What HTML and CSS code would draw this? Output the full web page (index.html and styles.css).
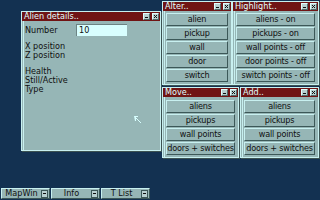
FILE: index.html
```html
<!DOCTYPE html>
<html>
<head>
<meta charset="utf-8">
<link rel="stylesheet" href="styles.css">
</head>
<body>
<div class="desktop">
  <div class="win win-alien">
    <div class="title"><span class="tt">Alien details..</span><span class="gad gad-depth"></span><span class="gad gad-close"></span></div>
    <div class="body form">
      <div class="row"><span class="lbl">Number</span><span class="field">10</span></div>
      <div class="grp"><div>X position</div><div>Z position</div></div>
      <div class="grp"><div>Health</div><div>Still/Active</div><div>Type</div></div>
    </div>
  </div>

  <div class="win win-alter">
    <div class="title"><span class="tt">Alter..</span><span class="gad gad-depth"></span><span class="gad gad-close"></span></div>
    <div class="body btns">
      <div class="btn">alien</div>
      <div class="btn">pickup</div>
      <div class="btn">wall</div>
      <div class="btn">door</div>
      <div class="btn">switch</div>
    </div>
  </div>

  <div class="win win-high">
    <div class="title"><span class="tt">Highlight..</span><span class="gad gad-depth"></span><span class="gad gad-close"></span></div>
    <div class="body btns">
      <div class="btn">aliens - on</div>
      <div class="btn">pickups - on</div>
      <div class="btn">wall points - off</div>
      <div class="btn">door points - off</div>
      <div class="btn">switch points - off</div>
    </div>
  </div>

  <div class="win win-move">
    <div class="title"><span class="tt">Move..</span><span class="gad gad-depth"></span><span class="gad gad-close"></span></div>
    <div class="body btns">
      <div class="btn">aliens</div>
      <div class="btn">pickups</div>
      <div class="btn">wall points</div>
      <div class="btn">doors + switches</div>
    </div>
  </div>

  <div class="win win-add">
    <div class="title"><span class="tt">Add..</span><span class="gad gad-depth"></span><span class="gad gad-close"></span></div>
    <div class="body btns">
      <div class="btn">aliens</div>
      <div class="btn">pickups</div>
      <div class="btn">wall points</div>
      <div class="btn">doors + switches</div>
    </div>
  </div>

  <svg class="cursor" width="8" height="8" viewBox="0 0 8 8">
    <path d="M0 0h4v1h-2v1h1v1h1v1h1v1h1v1h1v1h-1v-1h-1v-1h-1v-1h-1v-1h-1v2h-1z" fill="#d8ffff"/>
  </svg>

  <div class="taskbar">
    <div class="task"><span class="tl">MapWin</span><span class="tg"></span></div>
    <div class="task"><span class="tl">Info</span><span class="tg"></span></div>
    <div class="task"><span class="tl">T List</span><span class="tg"></span></div>
  </div>
</div>
</body>
</html>
```
FILE: styles.css
```css
* { box-sizing: border-box; }
html, body {
  margin: 0;
  padding: 0;
  width: 320px;
  height: 200px;
  overflow: hidden;
  background: #133151;
}
body {
  font-family: "Liberation Sans Narrow", "DejaVu Sans Condensed", "Liberation Sans", sans-serif;
  font-size: 9px;
  color: #101010;
}
.desktop {
  position: relative;
  width: 320px;
  height: 200px;
}
.win {
  position: absolute;
  background: #96b6b6;
  border: 1px solid #c8f0f0;
  box-shadow: inset 1px 0 0 #96b6b6, inset 2px 0 0 #c8f0f0, 1px 1px 0 #3c5252;
  display: flex;
  flex-direction: column;
}
.title {
  height: 9px;
  background: #701414;
  color: #e0ffff;
  display: flex;
  align-items: center;
  padding: 0 1px 0 2px;
  gap: 2px;
  flex: none;
  line-height: 9px;
}
.tt { flex: 1; white-space: nowrap; }
.gad {
  width: 7px;
  height: 7px;
  background: #b8d0d0;
  border: 1px solid #e0ffff;
  border-right-color: #506868;
  border-bottom-color: #506868;
  position: relative;
  flex: none;
}
.gad-depth::after {
  content: "";
  position: absolute;
  left: 1px;
  top: 3px;
  width: 3px;
  height: 1px;
  background: #101010;
}
.gad-close::after {
  content: "";
  position: absolute;
  left: 1px;
  top: 1px;
  width: 3px;
  height: 3px;
  background:
    linear-gradient(#101010, #101010) 0 0 / 1px 1px no-repeat,
    linear-gradient(#101010, #101010) 2px 0 / 1px 1px no-repeat,
    linear-gradient(#101010, #101010) 1px 1px / 1px 1px no-repeat,
    linear-gradient(#101010, #101010) 0 2px / 1px 1px no-repeat,
    linear-gradient(#101010, #101010) 2px 2px / 1px 1px no-repeat;
}
.win-alien { left: 21px; top: 11px; width: 140px; height: 140px; }
.win-alter { left: 162px; top: 1px; width: 70px; height: 84px; }
.win-high { left: 232px; top: 1px; width: 87px; height: 84px; }
.win-move { left: 162px; top: 87px; width: 77px; height: 71px; }
.win-add { left: 240px; top: 87px; width: 79px; height: 71px; }

.btns {
  display: flex;
  flex-direction: column;
  gap: 1px;
  padding: 2px 3px 0 3px;
}
.win-move .btns, .win-add .btns { padding-top: 3px; }
.btn {
  height: 13px;
  background: #96b6b6;
  border: 1px solid #c8f0f0;
  border-right-color: #3c5858;
  border-bottom-color: #3c5858;
  box-shadow: inset 1px 1px 0 #96b6b6;
  text-align: center;
  line-height: 11px;
  white-space: nowrap;
  letter-spacing: -0.2px;
}

.form {
  padding: 3px 0 0 3px;
  line-height: 9px;
}
.row {
  display: flex;
  align-items: center;
  height: 12px;
}
.lbl { width: 51px; }
.field {
  width: 51px;
  height: 12px;
  background: #d8ffff;
  border-top: 1px solid #6c8484;
  border-left: 1px solid #6c8484;
  padding-left: 2px;
  line-height: 11px;
}
.grp { margin-top: 6px; }
.grp + .grp { margin-top: 7px; }

.cursor {
  position: absolute;
  left: 134px;
  top: 116px;
}

.taskbar {
  position: absolute;
  left: 1px;
  top: 188px;
  display: flex;
  gap: 1px;
}
.task {
  width: 49px;
  height: 11px;
  background: #96b6b6;
  border: 1px solid #c8f0f0;
  border-right-color: #3c5858;
  border-bottom-color: #3c5858;
  display: flex;
  align-items: center;
  padding: 0 1px 0 0;
}
.tl { flex: 1; text-align: center; line-height: 9px; }
.tg {
  width: 7px;
  height: 8px;
  border: 1px solid #3c5858;
  position: relative;
  background: #b8d0d0;
  flex: none;
}
.tg::after {
  content: "";
  position: absolute;
  left: 1px;
  top: 2px;
  width: 3px;
  height: 1px;
  background: #101010;
}
```
